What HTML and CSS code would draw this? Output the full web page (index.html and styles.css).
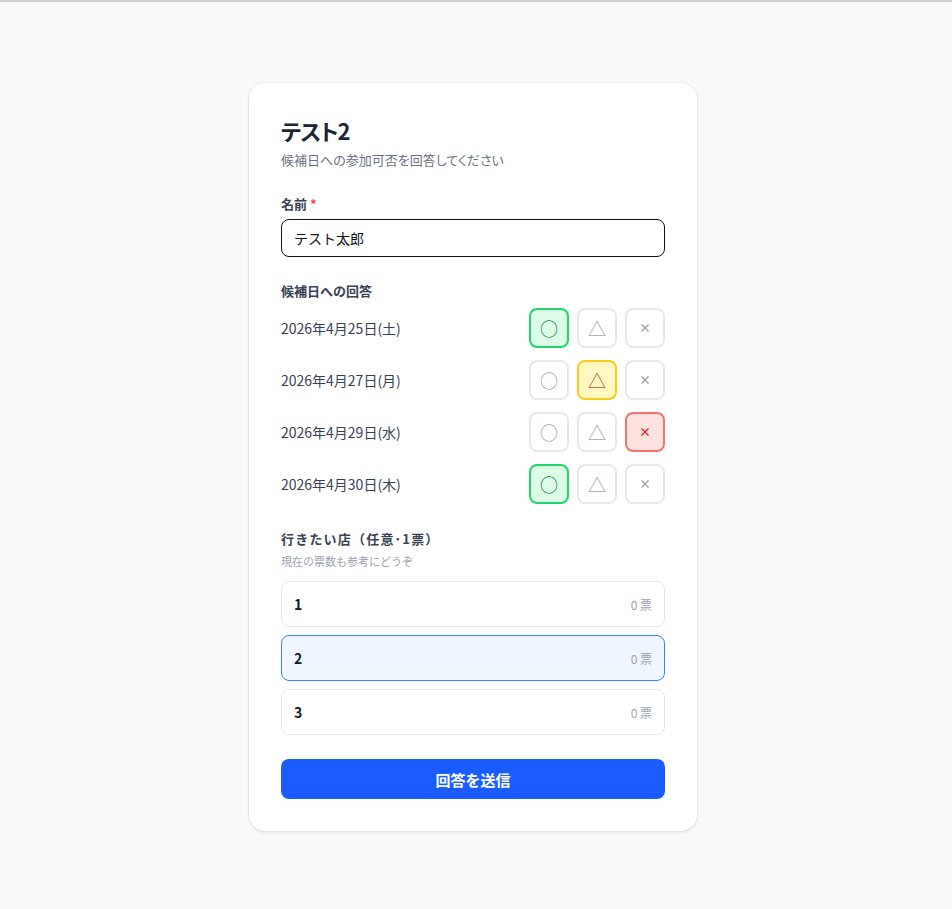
FILE: index.html
```html
<!DOCTYPE html>
<html lang="ja">
<head>
<meta charset="utf-8">
<title>テスト2</title>
<link rel="stylesheet" href="styles.css">
</head>
<body>
<div class="page">
  <main class="card">
    <header class="head">
      <h1 class="title">テスト2</h1>
      <p class="subtitle">候補日への参加可否を回答してください</p>
    </header>

    <section class="field">
      <label class="label">名前 <span class="req">*</span></label>
      <div class="input">テスト太郎</div>
    </section>

    <section class="field field-dates">
      <div class="label label-gap">候補日への回答</div>
      <div class="dates">
        <div class="date-row">
          <span class="date">2026年4月25日(土)</span>
          <div class="choices">
            <span class="choice ok on">○</span>
            <span class="choice maybe">△</span>
            <span class="choice ng">×</span>
          </div>
        </div>
        <div class="date-row">
          <span class="date">2026年4月27日(月)</span>
          <div class="choices">
            <span class="choice ok">○</span>
            <span class="choice maybe on">△</span>
            <span class="choice ng">×</span>
          </div>
        </div>
        <div class="date-row">
          <span class="date">2026年4月29日(水)</span>
          <div class="choices">
            <span class="choice ok">○</span>
            <span class="choice maybe">△</span>
            <span class="choice ng on">×</span>
          </div>
        </div>
        <div class="date-row">
          <span class="date">2026年4月30日(木)</span>
          <div class="choices">
            <span class="choice ok on">○</span>
            <span class="choice maybe">△</span>
            <span class="choice ng">×</span>
          </div>
        </div>
      </div>
    </section>

    <section class="field">
      <div class="label label-shop">行きたい店（任意･1票）</div>
      <div class="hint">現在の票数も参考にどうぞ</div>
      <div class="shops">
        <div class="shop"><span class="shop-name">1</span><span class="votes">0 票</span></div>
        <div class="shop selected"><span class="shop-name">2</span><span class="votes">0 票</span></div>
        <div class="shop"><span class="shop-name">3</span><span class="votes">0 票</span></div>
      </div>
    </section>

    <button class="submit" type="button">回答を送信</button>
  </main>
</div>
</body>
</html>
```

FILE: styles.css
```css
* { box-sizing: border-box; }

html, body {
  margin: 0;
  padding: 0;
}

body {
  background: #f8f9fb;
  border-top: 2px solid #cfd0d3;
  font-family: "Noto Sans CJK JP", "Noto Sans", sans-serif;
  color: #1f2937;
  min-height: 909px;
}

.page {
  display: flex;
  justify-content: center;
  padding: 81px 6px 0 0;
}

.card {
  width: 448px;
  background: #ffffff;
  border-radius: 16px;
  box-shadow: 0 1px 3px rgba(15, 23, 42, 0.12), 0 0 0 1px rgba(15, 23, 42, 0.03);
  padding: 32px;
  display: flex;
  flex-direction: column;
}

.head {
  margin-bottom: 24px;
}

.title {
  margin: 0;
  font-size: 22px;
  line-height: 31px;
  font-weight: 700;
  color: #1b2433;
  letter-spacing: -1px;
  font-feature-settings: "palt";
}

.subtitle {
  margin: 4px 0 0;
  font-size: 13px;
  line-height: 20px;
  color: #6b7280;
  font-feature-settings: "palt";
}

.field {
  margin-bottom: 24px;
}

.field-dates {
  margin-bottom: 25px;
}

.label {
  display: block;
  font-size: 13px;
  line-height: 20px;
  font-weight: 700;
  color: #374151;
  margin-bottom: 5px;
}

.label-gap {
  margin-bottom: 7px;
}

.label-shop {
  letter-spacing: 1.2px;
}

.req {
  color: #ef4444;
}

.input {
  height: 38px;
  border: 1.5px solid #111111;
  border-radius: 8px;
  padding: 0 12px;
  display: flex;
  align-items: center;
  font-size: 14px;
  color: #111111;
}

.dates {
  display: flex;
  flex-direction: column;
  gap: 12px;
}

.date-row {
  display: flex;
  align-items: center;
  justify-content: space-between;
  height: 40px;
}

.date {
  font-size: 14px;
  color: #374151;
}

.choices {
  display: flex;
  gap: 8px;
}

.choice {
  width: 40px;
  height: 40px;
  border: 2px solid #e5e7eb;
  border-radius: 8px;
  background: #ffffff;
  display: flex;
  align-items: center;
  justify-content: center;
  font-size: 18px;
  line-height: 1;
  color: #9ca3af;
}

.choice.ok { color: #94a3b8; }
.choice.ng { font-size: 12px; font-weight: 700; color: #9ca3af; }

.choice.ok.on {
  border-color: #22d46e;
  background: #dcfce7;
  color: #15803d;
}

.choice.maybe.on {
  border-color: #facc15;
  background: #fef9c3;
  color: #a16207;
}

.choice.ng.on {
  border-color: #f87171;
  background: #fee2e2;
  color: #dc2626;
}

.hint {
  font-size: 11px;
  line-height: 18px;
  color: #9ca3af;
  margin: -2px 0 11px;
}

.shops {
  display: flex;
  flex-direction: column;
  gap: 8px;
}

.shop {
  height: 46px;
  border: 1px solid #e5e7eb;
  border-radius: 8px;
  background: #ffffff;
  display: flex;
  align-items: center;
  justify-content: space-between;
  padding: 0 12px;
}

.shop.selected {
  border-color: #3b82f6;
  background: #eff6ff;
}

.shop-name {
  font-size: 14px;
  font-weight: 700;
  color: #111827;
}

.votes {
  font-size: 12px;
  color: #9ca3af;
}

.submit {
  height: 40px;
  border: none;
  border-radius: 8px;
  background: #1a5cff;
  color: #ffffff;
  font-family: inherit;
  font-size: 15px;
  font-weight: 700;
  cursor: pointer;
}
```
